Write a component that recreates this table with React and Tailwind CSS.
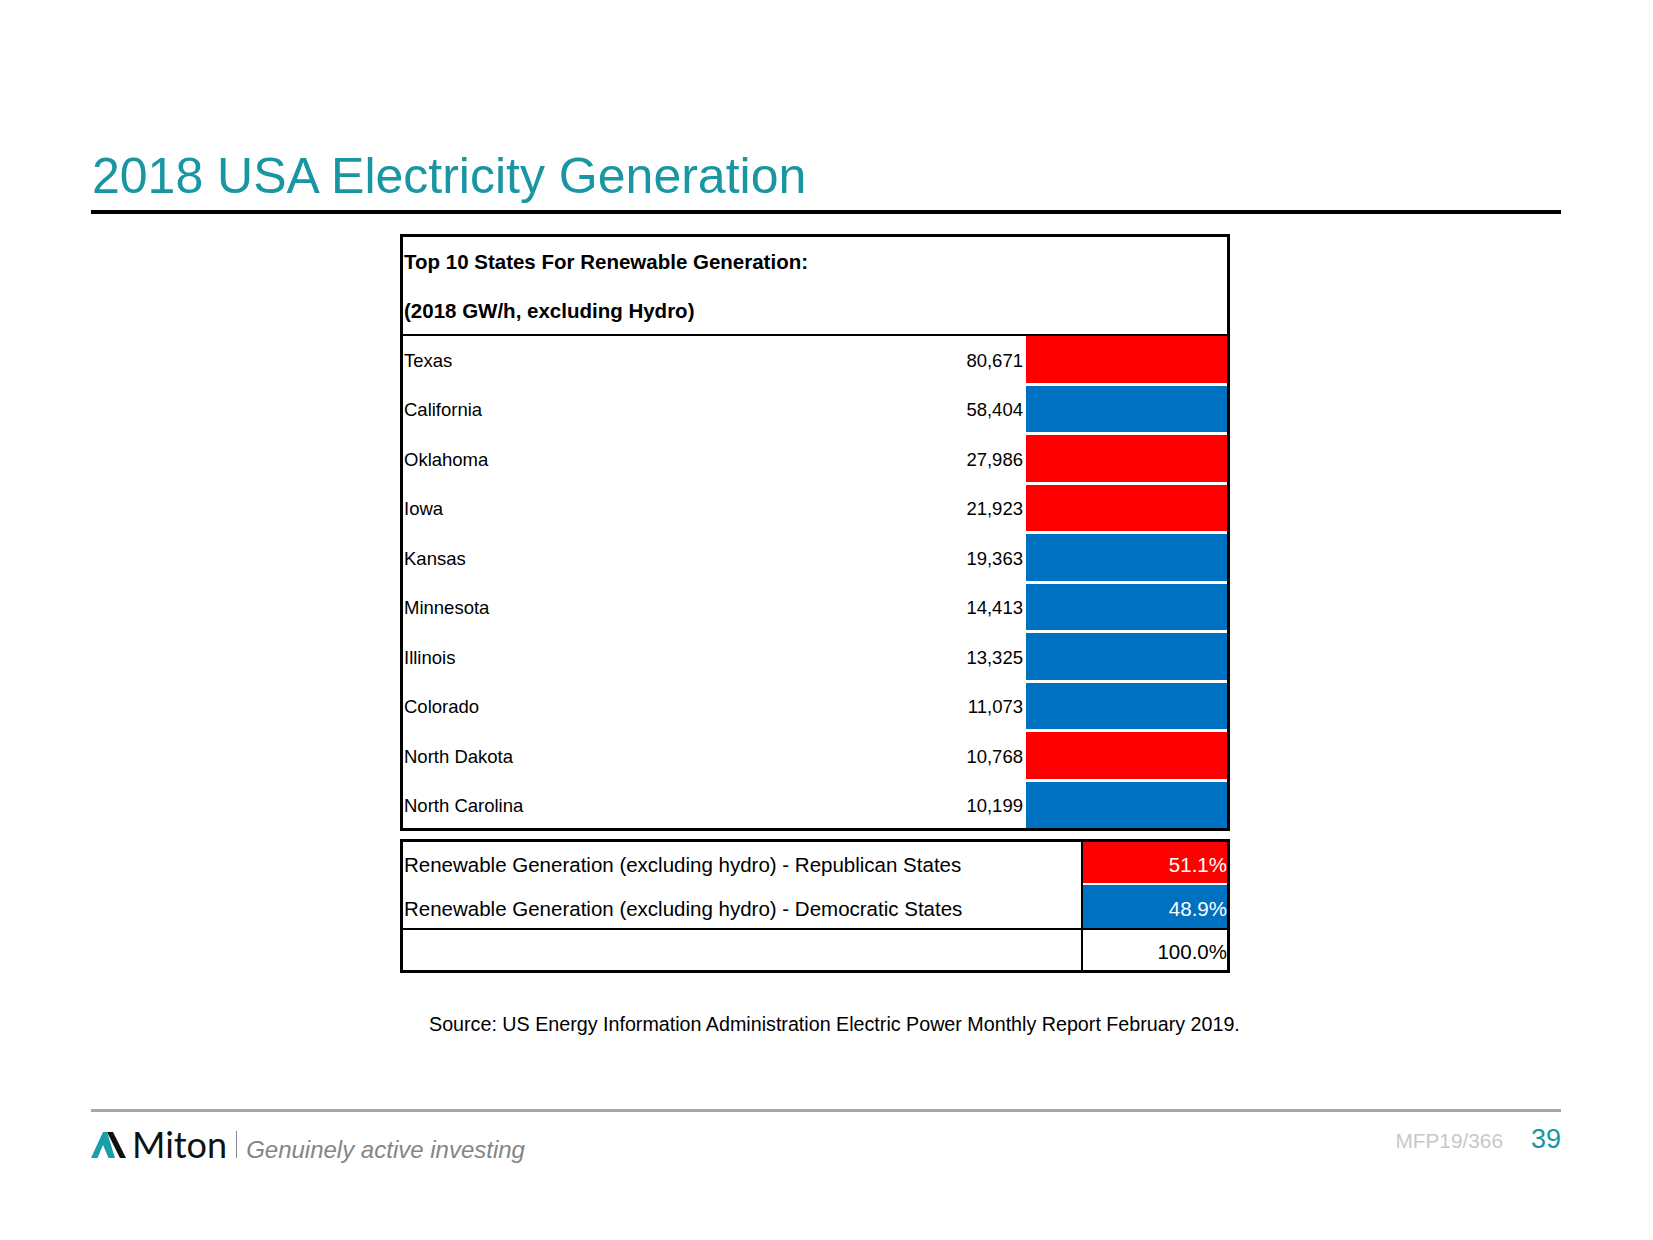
import React from "react";

const rows = [
  ["Texas", "80,671", "r"],
  ["California", "58,404", "b"],
  ["Oklahoma", "27,986", "r"],
  ["Iowa", "21,923", "r"],
  ["Kansas", "19,363", "b"],
  ["Minnesota", "14,413", "b"],
  ["Illinois", "13,325", "b"],
  ["Colorado", "11,073", "b"],
  ["North Dakota", "10,768", "r"],
  ["North Carolina", "10,199", "b"],
];

function Logo() {
  return (
    <svg width="36" height="26" viewBox="0 0 36 26" className="block">
      <polygon points="0,26 12,0 16,0 24,26 17.5,26 12,13 6.5,26" fill="#1a9fa8" />
      <polygon points="16,0 22,0 35,26 29,26" fill="#111111" />
    </svg>
  );
}

export default function App() {
  return (
    <div
      className="w-[1653px] h-[1240px] bg-white flex flex-col text-black"
      style={{ fontFamily: '"Liberation Sans", Arial, sans-serif' }}
    >
      <div className="pt-[151px] pl-[92px]">
        <h1 className="text-[50px] leading-[50px] text-[#1a96a2] font-normal">
          2018 USA Electricity Generation
        </h1>
      </div>
      <div className="mt-[9px] ml-[91px] w-[1470px] h-[4px] bg-black" />

      {/* Top 10 table */}
      <div className="mt-[20px] ml-[400px] w-[830px] border-[3px] border-black flex flex-col">
        <div className="h-[48.5px] flex items-center pl-px pt-[2px] text-[20.5px] font-bold">
          Top 10 States For Renewable Generation:
        </div>
        <div className="h-[48.5px] flex items-center pl-px pt-[4px] text-[20.5px] font-bold">
          (2018 GW/h, excluding Hydro)
        </div>
        <div className="h-[2px] bg-black" />
        <div className="flex flex-col gap-[3px]">
          {rows.map(([name, val, c]) => (
            <div key={name} className="flex h-[46.5px]">
              <div className="flex-1 flex items-center justify-between pl-px pr-[3px] pt-[3px] text-[18.5px]">
                <span>{name}</span>
                <span>{val}</span>
              </div>
              <div
                className={
                  c === "r" ? "w-[201px] bg-[#ff0000]" : "w-[201px] bg-[#0070c0]"
                }
              />
            </div>
          ))}
        </div>
      </div>

      {/* Summary table */}
      <div className="mt-[8px] ml-[400px] w-[830px] border-[3px] border-black flex flex-col text-[20.5px]">
        <div className="flex">
          <div className="w-[678px] flex flex-col">
            <div className="h-[41px] flex items-center pl-px pt-[5px]">
              Renewable Generation (excluding hydro) - Republican States
            </div>
            <div className="h-[2px]" />
            <div className="h-[43px] flex items-center pl-px pt-[5px]">
              Renewable Generation (excluding hydro) - Democratic States
            </div>
          </div>
          <div className="w-[2px] bg-black" />
          <div className="w-[144px] flex flex-col">
            <div className="h-[41px] flex items-center justify-end pt-[5px] bg-[#ff0000] text-white">
              51.1%
            </div>
            <div className="h-[2px] bg-white" />
            <div className="h-[43px] flex items-center justify-end pt-[5px] bg-[#0070c0] text-white">
              48.9%
            </div>
          </div>
        </div>
        <div className="h-[2px] bg-black" />
        <div className="flex h-[40px]">
          <div className="w-[678px]" />
          <div className="w-[2px] bg-black" />
          <div className="w-[144px] flex items-center justify-end pt-[4px]">100.0%</div>
        </div>
      </div>

      <div className="mt-[39px] ml-[429px] text-[19.7px] leading-[24px]">
        Source: US Energy Information Administration Electric Power Monthly Report February 2019.
      </div>

      <div className="mt-[73px] ml-[91px] w-[1470px] h-[3px] bg-[#a6a6a6]" />

      <div className="mt-[14px] ml-[91px] w-[1470px] flex justify-between items-start">
        <div className="flex items-baseline">
          <Logo />
          <span
            className="ml-[5px] text-[36px] leading-none text-[#111111]"
            style={{ fontFamily: "Lato, sans-serif" }}
          >
            Miton
          </span>
          <div className="ml-[9px] w-px h-[27px] bg-[#8a8a8a]" />
          <span className="ml-[9px] text-[24px] leading-none italic text-[#858585]">
            Genuinely active investing
          </span>
        </div>
        <div className="flex items-baseline gap-[28px]">
          <span className="text-[20.8px] leading-none text-[#c8c8c8]">MFP19/366</span>
          <span className="text-[27px] leading-none text-[#1a96a2]">39</span>
        </div>
      </div>
    </div>
  );
}
